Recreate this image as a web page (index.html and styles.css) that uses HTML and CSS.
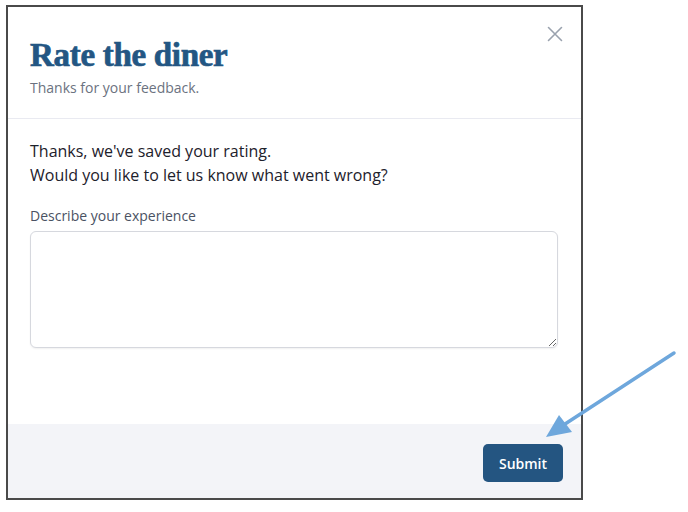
FILE: index.html
```html
<!DOCTYPE html>
<html lang="en">
<head>
    <meta charset="UTF-8">
    <meta name="viewport" content="width=device-width, initial-scale=1.0">
    <title>Rate the diner</title>
    <link rel="stylesheet" href="styles.css">
</head>
<body>
    <div class="modal">
        <div class="modal-header">
            <div class="modal-titles">
                <h1>Rate the diner</h1>
                <p class="subtitle">Thanks for your feedback.</p>
            </div>
            <button type="button" class="close-btn" aria-label="Close">
                <svg width="16" height="16" viewBox="0 0 16 16">
                    <path d="M1.5 1.5 L14.5 14.5 M14.5 1.5 L1.5 14.5" stroke="#9aa2ae" stroke-width="1.6" fill="none" stroke-linecap="round"/>
                </svg>
            </button>
        </div>

        <form class="modal-body">
            <p class="message">Thanks, we've saved your rating.<br>Would you like to let us know what went wrong?</p>
            <label for="experience">Describe your experience</label>
            <textarea id="experience" name="experience"></textarea>
        </form>

        <div class="modal-footer">
            <button type="button" class="submit-btn">Submit</button>
        </div>
    </div>

    <!-- annotation arrow drawn over the screenshot -->
    <svg class="arrow" width="688" height="512" viewBox="0 0 688 512">
        <line x1="674" y1="353" x2="562" y2="426" stroke="#6ea7dc" stroke-width="3.5" stroke-linecap="round"/>
        <polygon points="546,437 559,415 572,432" fill="#6ea7dc"/>
    </svg>
</body>
</html>
```

FILE: styles.css
```css
body {
    margin: 0;
    font-family: "Open Sans", Arial, sans-serif;
    background-color: #fff;
    position: relative;
}

.modal {
    margin: 5px 0 0 6px;
    width: 573px;
    height: 491px;
    border: 2px solid #4a4a4a;
    display: flex;
    flex-direction: column;
    background-color: #fff;
}

.modal-header {
    display: flex;
    justify-content: space-between;
    padding: 0 18px 0 22px;
    border-bottom: 1px solid #e9eaf1;
}

.modal-titles {
    padding: 28px 0 20px;
}

h1 {
    margin: 0;
    font-family: "Liberation Serif", "Times New Roman", serif;
    font-weight: bold;
    font-size: 33px;
    line-height: 40px;
    color: #235683;
    -webkit-text-stroke: 0.7px #235683;
    letter-spacing: -0.3px;
}

.subtitle {
    margin: 3px 0 0;
    font-size: 14px;
    line-height: 20px;
    color: #6b7280;
}

.close-btn {
    margin-top: 19px;
    padding: 0;
    width: 16px;
    height: 16px;
    border: none;
    background: none;
    cursor: pointer;
}

.modal-body {
    flex: 1;
    display: flex;
    flex-direction: column;
    padding: 20px 23px 0 22px;
}

.message {
    margin: 0;
    font-size: 16px;
    line-height: 24px;
    color: #1d212b;
}

label {
    margin-top: 19px;
    font-size: 14px;
    line-height: 20px;
    color: #4a5263;
}

textarea {
    margin-top: 5px;
    height: 117px;
    padding: 8px;
    border: 1px solid #d6d8de;
    border-radius: 6px;
    box-sizing: border-box;
    box-shadow: 0 1px 2px rgba(0, 0, 0, 0.06);
    font-family: inherit;
    font-size: 14px;
}

.modal-footer {
    height: 74px;
    display: flex;
    justify-content: flex-end;
    align-items: flex-start;
    padding: 20px 18px 0 0;
    box-sizing: border-box;
    background-color: #f3f4f8;
}

.submit-btn {
    width: 80px;
    height: 38px;
    border: none;
    border-radius: 5px;
    background-color: #245581;
    color: #fff;
    font-family: inherit;
    font-size: 14px;
    font-weight: 600;
    cursor: pointer;
}

.arrow {
    position: absolute;
    top: 0;
    left: 0;
    pointer-events: none;
}
```
